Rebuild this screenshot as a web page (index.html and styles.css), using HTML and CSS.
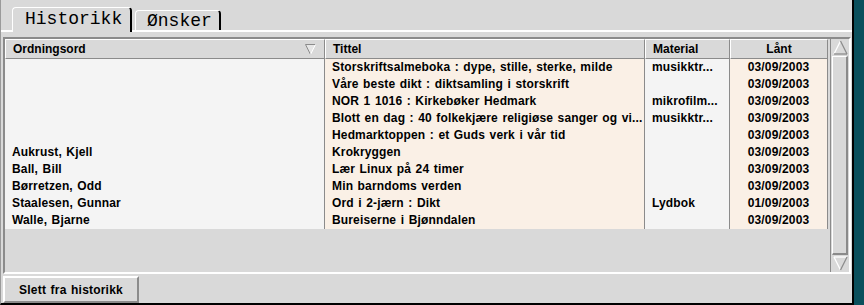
FILE: index.html
```html
<!DOCTYPE html>
<html lang="no">
<head>
<meta charset="utf-8">
<title>Historikk</title>
<link rel="stylesheet" href="styles.css">
</head>
<body>
<div class="window">
  <div class="tabs">
    <div class="tab active">Historikk</div>
    <div class="tab">Ønsker</div>
  </div>
  <div class="panel">
    <div class="frame">
      <div class="table">
        <div class="thead">
          <div class="th">Ordningsord
            <svg class="sort" width="11" height="11" viewBox="0 0 11 11"><polygon points="0.5,0.5 10.5,0.5 5.5,10.5" fill="#e6e6e6"/><polyline points="5.5,10.5 0.5,0.5 10.5,0.5" fill="none" stroke="#8b8b8b" stroke-width="1"/><line x1="10.5" y1="0.5" x2="5.5" y2="10.5" stroke="#ffffff" stroke-width="1"/></svg>
          </div>
          <div class="th">Tittel</div>
          <div class="th">Material</div>
          <div class="th center">Lånt</div>
        </div>
        <div class="tbody">
          <div class="td a"></div><div class="td b">Storskriftsalmeboka : dype, stille, sterke, milde</div><div class="td a">musikktr...</div><div class="td b center">03/09/2003</div>
          <div class="td a"></div><div class="td b">Våre beste dikt : diktsamling i storskrift</div><div class="td a"></div><div class="td b center">03/09/2003</div>
          <div class="td a"></div><div class="td b">NOR 1 1016 : Kirkebøker Hedmark</div><div class="td a">mikrofilm...</div><div class="td b center">03/09/2003</div>
          <div class="td a"></div><div class="td b">Blott en dag : 40 folkekjære religiøse sanger og vi...</div><div class="td a">musikktr...</div><div class="td b center">03/09/2003</div>
          <div class="td a"></div><div class="td b">Hedmarktoppen : et Guds verk i vår tid</div><div class="td a"></div><div class="td b center">03/09/2003</div>
          <div class="td a">Aukrust, Kjell</div><div class="td b">Krokryggen</div><div class="td a"></div><div class="td b center">03/09/2003</div>
          <div class="td a">Ball, Bill</div><div class="td b">Lær Linux på 24 timer</div><div class="td a"></div><div class="td b center">03/09/2003</div>
          <div class="td a">Børretzen, Odd</div><div class="td b">Min barndoms verden</div><div class="td a"></div><div class="td b center">03/09/2003</div>
          <div class="td a">Staalesen, Gunnar</div><div class="td b">Ord i 2-jærn : Dikt</div><div class="td a">Lydbok</div><div class="td b center">01/09/2003</div>
          <div class="td a">Walle, Bjarne</div><div class="td b">Bureiserne i Bjønndalen</div><div class="td a"></div><div class="td b center">03/09/2003</div>
        </div>
        <div class="fill"></div>
      </div>
      <div class="scrollbar">
        <div class="arrow">
          <svg width="15" height="15" viewBox="0 0 15 15"><polygon points="7.5,1 1,14 14,14" fill="#d9d9d9"/><line x1="7.5" y1="1" x2="1" y2="14" stroke="#ffffff" stroke-width="1.3"/><line x1="7.5" y1="1" x2="14" y2="14" stroke="#8b8b8b" stroke-width="1.3"/><line x1="1" y1="14" x2="14" y2="14" stroke="#8b8b8b" stroke-width="1.3"/></svg>
        </div>
        <div class="trough"><div class="thumb"></div></div>
        <div class="arrow">
          <svg width="15" height="15" viewBox="0 0 15 15"><polygon points="1,1 14,1 7.5,14" fill="#d9d9d9"/><line x1="1" y1="1" x2="14" y2="1" stroke="#ffffff" stroke-width="1.3"/><line x1="1" y1="1" x2="7.5" y2="14" stroke="#ffffff" stroke-width="1.3"/><line x1="14" y1="1" x2="7.5" y2="14" stroke="#8b8b8b" stroke-width="1.3"/></svg>
        </div>
      </div>
    </div>
  </div>
  <div class="footer">
    <button class="btn">Slett fra historikk</button>
  </div>
</div>
</body>
</html>
```

FILE: styles.css
```css
html, body {
  margin: 0;
  padding: 0;
}
body {
  background: #0a4f5c;
  width: 864px;
  height: 305px;
  overflow: hidden;
  font-family: "Liberation Sans", Arial, sans-serif;
  font-size: 12px;
  font-weight: bold;
  color: #000;
}
.window {
  box-sizing: border-box;
  width: 854px;
  height: 305px;
  background: #d9d9d9;
  border-left: 1px solid #9a9a9a;
  border-right: 2px solid #000;
  border-bottom: 2px solid #000;
  display: flex;
  flex-direction: column;
}
.tabs {
  height: 30px;
  display: flex;
  align-items: flex-end;
  padding-left: 11px;
  gap: 3px;
  font-family: "Liberation Mono", "Courier New", monospace;
  font-weight: normal;
  font-size: 18px;
}
.tab {
  box-sizing: border-box;
  height: 20px;
  width: 86px;
  padding-left: 11px;
  border-top: 1px solid #fff;
  border-left: 1px solid #fff;
  border-right: 2px solid #000;
  border-top-left-radius: 4px;
  border-top-right-radius: 4px;
  line-height: 20px;
  background: #d9d9d9;
}
.tab.active {
  height: 25px;
  width: 120px;
  padding-left: 12px;
  margin-bottom: -2px;
  line-height: 22px;
  position: relative;
  z-index: 1;
}
.panel {
  border-top: 2px solid #fff;
  padding: 5px 1px 0 2px;
  display: flex;
  flex-direction: column;
}
.frame {
  box-sizing: border-box;
  height: 237px;
  display: flex;
  border-top: 2px solid #8b8b8b;
  border-left: 2px solid #8b8b8b;
  border-bottom: 2px solid #fff;
  border-right: 2px solid #fff;
}
.table {
  width: 823px;
  display: flex;
  flex-direction: column;
}
.thead, .tbody {
  display: grid;
  grid-template-columns: 320px 320px 85px 98px;
}
.th {
  box-sizing: border-box;
  height: 20px;
  line-height: 18px;
  padding-left: 7px;
  border-top: 1px solid #fff;
  border-left: 1px solid #fff;
  border-right: 1px solid #8b8b8b;
  border-bottom: 1px solid #8b8b8b;
  display: flex;
  align-items: center;
  justify-content: space-between;
}
.th.center {
  justify-content: center;
  padding-left: 0;
}
.sort {
  margin-right: 8px;
}
.td {
  box-sizing: border-box;
  height: 17px;
  line-height: 17px;
  padding-left: 7px;
  border-right: 1px solid #8b8b8b;
  white-space: nowrap;
  overflow: hidden;
  word-spacing: 1px;
  letter-spacing: 0.15px;
}
.td.a {
  background: #f4f4f4;
}
.td.b {
  background: #faf0e6;
}
.td.center {
  text-align: center;
  padding-left: 0;
}
.fill {
  flex: 1;
}
.scrollbar {
  box-sizing: border-box;
  width: 19px;
  margin-left: 2px;
  border-left: 1px solid #8b8b8b;
  display: flex;
  flex-direction: column;
}
.arrow {
  height: 17px;
  display: flex;
  align-items: center;
  justify-content: center;
}
.trough {
  flex: 1;
  display: flex;
  padding: 0 1px 0 1px;
}
.thumb {
  flex: 1;
  box-sizing: border-box;
  border-top: 1px solid #fff;
  border-left: 1px solid #fff;
  border-right: 2px solid #8b8b8b;
  border-bottom: 2px solid #8b8b8b;
}
.footer {
  flex: 1;
  padding: 2px 0 0 2px;
}
.btn {
  box-sizing: border-box;
  width: 136px;
  height: 27px;
  margin: 0;
  padding: 0;
  background: #d9d9d9;
  border-top: 2px solid #fff;
  border-left: 2px solid #fff;
  border-right: 2px solid #8b8b8b;
  border-bottom: 2px solid #8b8b8b;
  font-family: "Liberation Sans", Arial, sans-serif;
  font-size: 12px;
  font-weight: bold;
  color: #000;
  word-spacing: 1px;
  letter-spacing: 0.2px;
}
```
